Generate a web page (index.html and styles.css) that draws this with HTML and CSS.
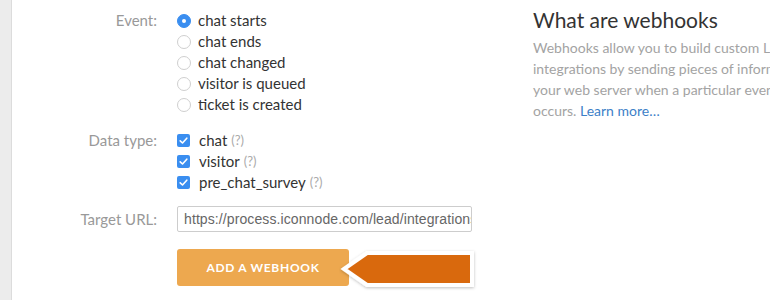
FILE: index.html
```html
<!DOCTYPE html>
<html>
<head>
<meta charset="utf-8">
<link rel="stylesheet" href="styles.css">
</head>
<body>
<div class="page">
  <div class="strip"></div>
  <div class="content">
    <div class="form">
      <div class="row">
        <div class="label">Event:</div>
        <div class="controls">
          <div class="opt"><span class="radio checked"></span>chat starts</div>
          <div class="opt"><span class="radio"></span>chat ends</div>
          <div class="opt"><span class="radio"></span>chat changed</div>
          <div class="opt"><span class="radio"></span>visitor is queued</div>
          <div class="opt"><span class="radio"></span>ticket is created</div>
        </div>
      </div>
      <div class="row">
        <div class="label">Data type:</div>
        <div class="controls">
          <div class="opt"><span class="check"><svg viewBox="0 0 13 13" width="13" height="13"><path d="M3.2 6.8 L5.5 9 L9.8 4.2" fill="none" stroke="#fff" stroke-width="1.6" stroke-linecap="round" stroke-linejoin="round"/></svg></span>chat <span class="help">(?)</span></div>
          <div class="opt"><span class="check"><svg viewBox="0 0 13 13" width="13" height="13"><path d="M3.2 6.8 L5.5 9 L9.8 4.2" fill="none" stroke="#fff" stroke-width="1.6" stroke-linecap="round" stroke-linejoin="round"/></svg></span>visitor <span class="help">(?)</span></div>
          <div class="opt"><span class="check"><svg viewBox="0 0 13 13" width="13" height="13"><path d="M3.2 6.8 L5.5 9 L9.8 4.2" fill="none" stroke="#fff" stroke-width="1.6" stroke-linecap="round" stroke-linejoin="round"/></svg></span>pre_chat_survey <span class="help">(?)</span></div>
        </div>
      </div>
      <div class="row url-row">
        <div class="label">Target URL:</div>
        <div class="controls">
          <div class="input">https://process.iconnode.com/lead/integrations</div>
        </div>
      </div>
      <div class="row btn-row">
        <div class="label"></div>
        <div class="controls">
          <div class="btn-wrap">
            <button class="btn">ADD A WEBHOOK</button>
            <svg class="arrow" width="140" height="44" viewBox="0 0 140 44">
              <defs>
                <filter id="sh" x="-10%" y="-20%" width="120%" height="150%">
                  <feDropShadow dx="0" dy="1" stdDeviation="1.5" flood-color="#000" flood-opacity="0.25"/>
                </filter>
              </defs>
              <polygon points="5,22 28,6 133,6 133,38 28,38" fill="#d9690f" stroke="#fff" stroke-width="4" stroke-linejoin="miter" filter="url(#sh)"/>
            </svg>
          </div>
        </div>
      </div>
    </div>
    <div class="info">
      <h2 class="title">What are webhooks</h2>
      <p class="desc">Webhooks allow you to build custom LiveChat<br>integrations by sending pieces of information to<br>your web server when a particular event<br>occurs. <a class="link" href="#">Learn more…</a></p>
    </div>
  </div>
</div>
</body>
</html>
```

FILE: styles.css
```css
html, body {
  margin: 0;
  padding: 0;
  background: #fff;
  overflow: hidden;
}
body {
  width: 770px;
  height: 300px;
  font-family: Lato, "Noto Sans", sans-serif;
  color: #333;
}
.page {
  display: flex;
  height: 300px;
}
.strip {
  width: 11px;
  flex: none;
  background: #ececec;
  border-right: 1px solid #dcdcdc;
}
.content {
  display: flex;
  flex: none;
  width: 800px;
}
.form {
  width: 521px;
  flex: none;
  padding-top: 10px;
}
.row {
  display: flex;
  gap: 20px;
  margin-bottom: 15px;
}
.label {
  width: 145px;
  flex: none;
  text-align: right;
  font-size: 15px;
  line-height: 21px;
  color: #999;
}
.controls {
  display: flex;
  flex-direction: column;
}
.opt {
  display: flex;
  align-items: center;
  font-size: 15px;
  line-height: 21px;
  color: #333;
  white-space: nowrap;
}
.radio {
  width: 12px;
  height: 12px;
  border: 1px solid #cfcfcf;
  border-radius: 50%;
  margin-right: 7px;
  box-sizing: content-box;
  background: #fff;
}
.radio.checked {
  background: #3a8ef0;
  border-color: #3a8ef0;
  position: relative;
}
.radio.checked::after {
  content: "";
  position: absolute;
  left: 4px;
  top: 4px;
  width: 4px;
  height: 4px;
  border-radius: 50%;
  background: #fff;
}
.check {
  width: 13px;
  height: 13px;
  border-radius: 2px;
  background: #3a8ef0;
  margin-right: 9px;
  display: flex;
}
.help {
  font-size: 13px;
  color: #aaa;
  margin-left: 4px;
}
.url-row {
  margin-bottom: 17px;
}
.url-row .label {
  padding-top: 1px;
}
.input {
  width: 295px;
  height: 26px;
  margin-top: -2px;
  box-sizing: border-box;
  border: 1px solid #cdcdcd;
  border-radius: 2px;
  padding: 0 6px;
  font-family: "Liberation Sans", Arial, sans-serif;
  font-size: 14px;
  letter-spacing: 0.1px;
  line-height: 24px;
  color: #666;
  overflow: hidden;
  white-space: nowrap;
}
.btn-wrap {
  position: relative;
}
.btn {
  display: block;
  width: 172px;
  height: 37px;
  border: none;
  border-radius: 3px;
  background: #eda84f;
  color: #fff;
  font-family: Lato, "Noto Sans", sans-serif;
  font-weight: bold;
  font-size: 12px;
  letter-spacing: 0.7px;
  padding: 0;
}
.arrow {
  position: absolute;
  left: 162px;
  top: -2px;
}
.info {
  width: 300px;
  flex: none;
  padding-top: 7px;
}
.title {
  margin: 0;
  font-size: 21px;
  font-weight: normal;
  line-height: 26px;
  color: #333;
}
.desc {
  margin: 4px 0 0;
  font-size: 14px;
  line-height: 21px;
  color: #a3a3a3;
  white-space: nowrap;
}
.link {
  color: #3d7fc8;
  text-decoration: none;
}
```
